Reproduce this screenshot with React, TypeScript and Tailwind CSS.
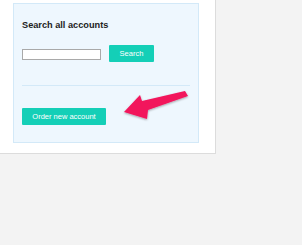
import React from "react";

export default function App() {
  return (
    <div
      className="relative w-[302px] h-[245px] bg-[#f3f3f3] overflow-hidden"
      style={{ fontFamily: '"Liberation Sans", Arial, sans-serif' }}
    >
      <div className="w-[216px] h-[154px] bg-white border-r border-b border-[#dcdcdc] pt-[3px] pl-[13px]">
        <div className="w-[186px] h-[140px] bg-[#eef7fe] border border-[#d3e9f8] pt-[16px] px-[8px] flex flex-col">
          <div className="text-[9.2px] leading-[11px] font-bold text-[#222]">Search all accounts</div>
          <div className="flex items-start mt-[14px] h-[17px]">
            <input
              type="text"
              className="mt-[4px] w-[79px] h-[11px] bg-white border border-[#a9a9a9] outline-none"
            />
            <button className="ml-[8px] w-[45px] h-[17px] bg-[#14cfb7] text-white text-[7.5px] leading-[17px] text-center rounded-[1px]">
              Search
            </button>
          </div>
          <div className="mt-[23px] h-px bg-[#d3e9f8]" />
          <div className="mt-[16px]">
            <button className="w-[84px] h-[17px] bg-[#14cfb7] text-white text-[7.5px] leading-[17px] text-center rounded-[1px]">
              Order new account
            </button>
          </div>
        </div>
      </div>
      <svg
        className="absolute left-0 top-0 pointer-events-none"
        width="302"
        height="245"
        viewBox="0 0 302 245"
      >
        <defs>
          <filter id="sh" x="-20%" y="-20%" width="140%" height="140%">
            <feDropShadow dx="0" dy="1" stdDeviation="0.8" floodColor="#000" floodOpacity="0.35" />
          </filter>
        </defs>
        <polygon
          points="124,112 140,95 142,101 185,91 188,96 148,110 147,119"
          fill="#f2145c"
          filter="url(#sh)"
        />
      </svg>
    </div>
  );
}
